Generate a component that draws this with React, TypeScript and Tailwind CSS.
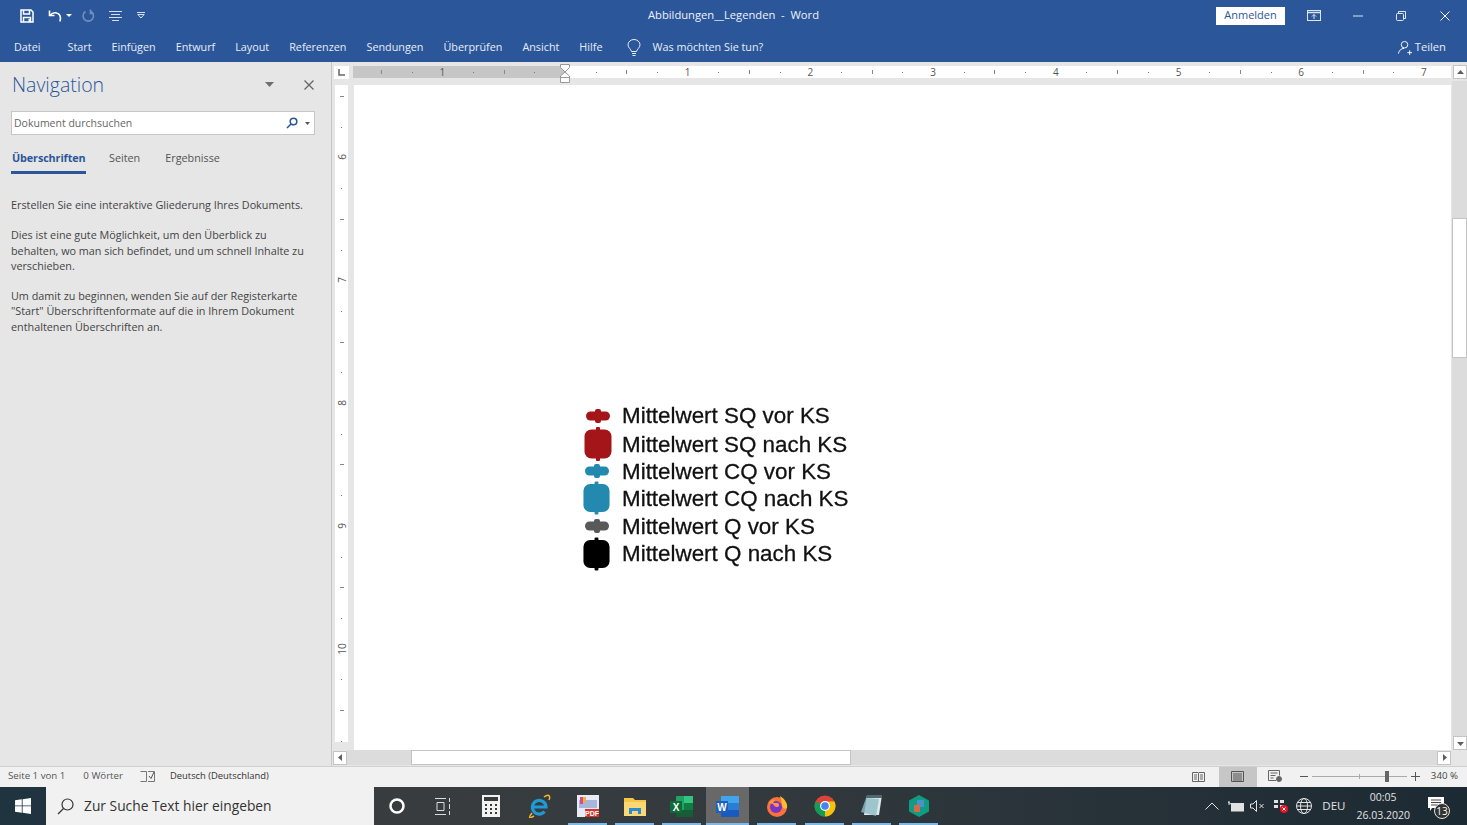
import React from "react";

const uiFont = { fontFamily: '"Open Sans", "Noto Sans", sans-serif' };

const tabs = ["Start", "Einfügen", "Entwurf", "Layout", "Referenzen", "Sendungen", "Überprüfen", "Ansicht", "Hilfe"];

const legend = [
  { label: "Mittelwert SQ vor KS", color: "#a31518", big: false, row: "h-[28px]", icon: "pr-[9px]", text: "mt-0" },
  { label: "Mittelwert SQ nach KS", color: "#a31518", big: true, row: "h-[28px]", icon: "pr-[9px]", text: "mt-[2px]" },
  { label: "Mittelwert CQ vor KS", color: "#2389ae", big: false, row: "h-[26px]", icon: "pr-[11px]", text: "mt-[2px]" },
  { label: "Mittelwert CQ nach KS", color: "#2389ae", big: true, row: "h-[28px]", icon: "pr-[11px]", text: "mt-[2px]" },
  { label: "Mittelwert Q vor KS", color: "#595959", big: false, row: "h-[28px]", icon: "pr-[11px]", text: "mt-[3px]" },
  { label: "Mittelwert Q nach KS", color: "#000000", big: true, row: "h-[28px]", icon: "pr-[11px]", text: "mt-px" },
];

const ORIGIN_X = 212; // 565 on screen, ruler starts at 353
const UNIT = 122.7;

function HorizontalRuler() {
  const marks: React.ReactNode[] = [];
  for (let q = -8; q <= 35; q++) {
    const x = ORIGIN_X + (q * UNIT) / 4;
    if (x < 4 || x > 1094) continue;
    const n = Math.abs(q) / 4;
    if (q !== 0 && q % 4 === 0) {
      marks.push(
        <span key={q} className="absolute top-0 -translate-x-1/2 text-[10px] leading-[12px] text-[#555]" style={{ left: x }}>
          {n}
        </span>
      );
    } else if (q % 2 !== 0) {
      marks.push(<span key={q} className="absolute top-[6px] h-px w-px bg-[#777]" style={{ left: x }} />);
    } else if (q !== 0) {
      marks.push(<span key={q} className="absolute top-[4px] h-[4px] w-px bg-[#888]" style={{ left: x }} />);
    }
  }
  return (
    <div className="relative h-[12px] w-[1098px] bg-white">
      <div className="absolute inset-y-0 left-0 w-[212px] bg-[#c6c6c6]" />
      {marks}
    </div>
  );
}

function VerticalRuler() {
  const marks: React.ReactNode[] = [];
  // first tick is at y=96 on screen, ruler starts at y=85
  for (let i = 0; i < 22; i++) {
    const y = 11 + i * 30.7;
    const kind = i % 4;
    if (kind === 2) {
      const n = 6 + (i - 2) / 4;
      marks.push(
        <span key={i} className="absolute left-0 w-[13px] -translate-y-1/2 -rotate-90 text-center text-[10px] leading-[12px] text-[#555]" style={{ top: y }}>
          {n}
        </span>
      );
    } else if (kind === 0) {
      marks.push(<span key={i} className="absolute left-[5px] h-px w-[4px] bg-[#888]" style={{ top: y }} />);
    } else {
      marks.push(<span key={i} className="absolute left-[6px] h-px w-px bg-[#777]" style={{ top: y }} />);
    }
  }
  return <div className="relative h-[657px] w-[13px] bg-white">{marks}</div>;
}

function Marker({ color, big }: { color: string; big: boolean }) {
  if (big) {
    return (
      <svg width="30" height="34" viewBox="0 0 30 34" className="block">
        <rect x="13" y="0" width="4" height="34" rx="1" fill={color} />
        <rect x="1.5" y="2.5" width="27" height="29" rx="7" fill={color} />
      </svg>
    );
  }
  return (
    <svg width="26" height="16" viewBox="0 0 26 16" className="block">
      <rect x="10" y="1" width="6" height="14" rx="2" fill={color} />
      <rect x="1" y="3.5" width="24" height="9" rx="4.5" fill={color} />
    </svg>
  );
}

function Arrow({ dir, className = "" }: { dir: "up" | "down" | "left" | "right"; className?: string }) {
  const points = { up: "1,6 4.5,2 8,6", down: "1,3 4.5,7 8,3", left: "6,1 2,4.5 6,8", right: "3,1 7,4.5 3,8" }[dir];
  return (
    <svg width="9" height="9" viewBox="0 0 9 9" className={className}>
      <polygon points={points} fill="#5f5f5f" />
    </svg>
  );
}

function ScrollButton({ dir }: { dir: "up" | "down" | "left" | "right" }) {
  return (
    <div className="flex h-[14px] w-[14px] shrink-0 items-center justify-center border border-[#c4c4c4] bg-white">
      <Arrow dir={dir} />
    </div>
  );
}

function QuickAccess() {
  return (
    <div className="flex items-center">
      <svg width="16" height="16" viewBox="0 0 16 16" className="ml-[19px]" fill="none" stroke="#fff" strokeWidth="1.5">
        <path d="M2 2h10l2 2v10H2z" />
        <path d="M4.5 2v4h6V2M4.5 14v-4.500h7V14" />
        <rect x="9.500" y="11" width="1.500" height="3" fill="#fff" stroke="none" />
      </svg>
      <svg width="16" height="14" viewBox="0 0 16 14" className="ml-[13px]" fill="none" stroke="#fff" strokeWidth="1.6">
        <path d="M1.500 1.500v5h5" />
        <path d="M2 6.500c2-2.500 4.500-3 6.500-2.500 3 .7 5 3.500 3.500 8.500" />
      </svg>
      <svg width="6" height="4" viewBox="0 0 6 4" className="ml-[2px]">
        <polygon points="0,0 6,0 3,3" fill="#fff" />
      </svg>
      <svg width="14" height="14" viewBox="0 0 14 14" className="ml-[9px]" fill="none" stroke="#6f8fbd" strokeWidth="1.600">
        <path d="M4.500 2.500a5.200 5.200 0 1 0 5-.3" />
        <path d="M9.500 0.500v4h3" />
      </svg>
      <svg width="13" height="10" viewBox="0 0 13 10" className="ml-[14px]" stroke="#d5deec" strokeWidth="1">
        <path d="M0 .5h13M2 3.500h9M0 6.500h13M3 9.500h7" />
      </svg>
      <svg width="8" height="7" viewBox="0 0 8 7" className="ml-[15px]" fill="none" stroke="#d5deec">
        <path d="M0 .5h8M.8 2.500h6.400L4 6z" />
      </svg>
    </div>
  );
}

function WindowControls() {
  return (
    <div className="flex items-center justify-end">
      <button className="flex h-[18px] w-[69px] items-center justify-center bg-white pb-px text-[11px] text-[#2b579a]">Anmelden</button>
      <svg width="14" height="11" viewBox="0 0 14 11" className="ml-[22px]" fill="none" stroke="#dfe6f1">
        <rect x=".5" y=".5" width="13" height="10" />
        <path d="M.5 2.500h13" strokeWidth="1.500" />
        <path d="M7 9V4.500M5 6.500l2-2 2 2" />
      </svg>
      <svg width="10" height="2" viewBox="0 0 10 2" className="ml-[32px]">
        <path d="M0 1h10" stroke="#dfe6f1" />
      </svg>
      <svg width="10" height="10" viewBox="0 0 10 10" className="ml-[33px]" fill="none" stroke="#dfe6f1">
        <rect x=".5" y="2.500" width="7" height="7" rx="1" />
        <path d="M2.500 2.500V.5h7v7H7.500" />
      </svg>
      <svg width="10" height="10" viewBox="0 0 10 10" className="ml-[34px] mr-[17px]" stroke="#fff">
        <path d="M.5.5l9 9M9.500.5l-9 9" />
      </svg>
    </div>
  );
}

function Ribbon() {
  return (
    <header className="h-[62px] shrink-0 bg-[#2b579a] text-white">
      <div className="grid h-[31px] grid-cols-[1fr_auto_1fr] items-center">
        <QuickAccess />
        <div className="text-[11.200px] text-[#eef2f8]">Abbildungen__Legenden&nbsp; -&nbsp; Word</div>
        <WindowControls />
      </div>
      <div className="flex h-[31px] items-center pl-[14px] pt-[2px] text-[10.800px] text-[#e8edf5]">
        <span className="mr-[27px]">Datei</span>
        <div className="flex gap-[20px]">
          {tabs.map((t) => (
            <span key={t}>{t}</span>
          ))}
        </div>
        <svg width="14" height="18" viewBox="0 0 14 18" className="ml-[25px]" fill="none" stroke="#e8edf5">
          <path d="M4.500 12.500C4 10 1 8.800 1 5.800a6 5.300 0 0 1 12 0c0 3-3 4.200-3.500 6.700zM5 14.500h4M5.500 16.500h3" />
        </svg>
        <span className="ml-[11px]">Was möchten Sie tun?</span>
        <div className="ml-auto mr-[21px] flex items-center gap-[3px]">
          <svg width="14" height="15" viewBox="0 0 15 15" fill="none" stroke="#fff">
            <circle cx="7" cy="4.500" r="3.500" />
            <path d="M.5 14c.5-3.500 3-5.500 6-5.500M10 13h5M12.500 10.500v5" />
          </svg>
          <span className="text-[11.200px]">Teilen</span>
        </div>
      </div>
    </header>
  );
}

function NavigationPane() {
  return (
    <aside className="w-[332px] shrink-0 border-r border-[#c6c6c6] bg-[#e6e6e6] pl-[11px] pr-[16px]">
      <div className="flex h-[49px] items-center">
        <h1 className="mb-[3px] pl-px text-[19.500px] font-light text-[#2b579a]">Navigation</h1>
        <svg width="9" height="5" viewBox="0 0 9 5" className="mb-[5px] ml-auto">
          <polygon points="0,0 9,0 4.500,5" fill="#6f6f6f" />
        </svg>
        <svg width="10" height="10" viewBox="0 0 10 10" className="mb-[3px] ml-[30px] mr-px" stroke="#666" strokeWidth="1.300">
          <path d="M.5.5l9 9M9.500.5l-9 9" />
        </svg>
      </div>
      <div className="flex h-[24px] items-center border border-[#c6c6c6] bg-white pl-[2px] pr-[4px] text-[10.500px] text-[#666]">
        <span className="pt-[2px]">Dokument durchsuchen</span>
        <svg width="12" height="12" viewBox="0 0 12 12" className="ml-auto" fill="none" stroke="#2b579a" strokeWidth="1.600">
          <circle cx="7.500" cy="4.500" r="3.300" />
          <path d="M5 7L1 11" />
        </svg>
        <svg width="5" height="3" viewBox="0 0 5 3" className="ml-[7px]">
          <polygon points="0,0 5,0 2.500,3" fill="#555" />
        </svg>
      </div>
      <div className="mt-[12px] flex h-[27px] text-[10.800px] text-[#555]">
        <div className="h-full w-[75px] border-b-[3px] border-[#2b579a] pl-px pt-[3px] font-bold tracking-[-0.1px] text-[#2b579a]">Überschriften</div>
        <div className="ml-[23px] pt-[3px]">Seiten</div>
        <div className="ml-[25px] pt-[3px]">Ergebnisse</div>
      </div>
      <div className="mt-[23px] space-y-[15px] pr-[10px] text-[10.800px] leading-[15.300px] text-[#444]">
        <p>Erstellen Sie eine interaktive Gliederung Ihres Dokuments.</p>
        <p>Dies ist eine gute Möglichkeit, um den Überblick zu behalten, wo man sich befindet, und um schnell Inhalte zu verschieben.</p>
        <p>Um damit zu beginnen, wenden Sie auf der Registerkarte "Start" Überschriftenformate auf die in Ihrem Dokument enthaltenen Überschriften an.</p>
      </div>
    </aside>
  );
}

function DocumentArea() {
  return (
    <main className="flex min-w-0 flex-1 flex-col bg-[#e6e6e6]">
      <div className="flex min-h-0 flex-1">
        <div className="flex w-[1119px] flex-col">
          <div className="flex h-[23px] pt-[4px]">
            <div className="ml-[2px] flex h-[13px] w-[15px] items-center justify-center bg-white">
              <svg width="7" height="7" viewBox="0 0 7 7">
                <path d="M1 0v6h6" fill="none" stroke="#666" strokeWidth="1.500" />
              </svg>
            </div>
            <div className="relative ml-[4px]">
              <HorizontalRuler />
              <svg width="10" height="19" viewBox="0 0 10 19" className="absolute left-[207px] top-[-2px]" fill="#e6e6e6" stroke="#999">
                <path d="M.5.5h9v3L5 8 .5 3.500z" fill="#fff" />
                <path d="M5 8l4.500 4v6.500h-9V12z" fill="#fff" />
                <path d="M.5 13.500h9" />
              </svg>
            </div>
          </div>
          <div className="flex min-h-0 flex-1">
            <div className="ml-[3px] shrink-0">
              <VerticalRuler />
            </div>
            <div className="ml-[6px] flex-1 bg-white pl-[228px] pt-[317px]">
              {/* Legende ist im Original ein eingefuegtes Bild, daher leicht unscharf */}
              <div className="blur-[0.6px]" style={{ fontFamily: '"Liberation Sans", Arial, sans-serif' }}>
                {legend.map((l) => (
                  <div key={l.label} className={`flex items-center ${l.row}`}>
                    <div className={`flex w-[40px] justify-center ${l.icon}`}>
                      <Marker color={l.color} big={l.big} />
                    </div>
                    <span className={`whitespace-nowrap text-[22.400px] leading-none text-[#111] [-webkit-text-stroke:0.3px_#111] ${l.text}`}>{l.label}</span>
                  </div>
                ))}
              </div>
            </div>
          </div>
        </div>
        <div className="flex w-[16px] flex-col items-end pt-[3px]">
          <ScrollButton dir="up" />
          <div className="mt-[2px] flex w-[15px] flex-1 flex-col bg-[#dcdcdc]">
            <div className="mt-[137px] h-[140px] w-full border border-[#c4c4c4] bg-white" />
          </div>
          <ScrollButton dir="down" />
        </div>
      </div>
      <div className="flex h-[16px] items-center pb-px pl-px">
        <ScrollButton dir="left" />
        <div className="flex h-[15px] w-[1090px] bg-[#dcdcdc]">
          <div className="ml-[64px] h-full w-[440px] border border-[#c4c4c4] bg-white" />
        </div>
        <ScrollButton dir="right" />
      </div>
    </main>
  );
}

function StatusBar() {
  return (
    <footer className="flex h-[21px] shrink-0 items-center border-t border-[#d0d0d0] bg-[#f1f1f1] pb-[2px] pl-[8px] text-[9.700px] text-[#555]">
      <span>Seite 1 von 1</span>
      <span className="ml-[18px]">0 Wörter</span>
      <svg width="15" height="11" viewBox="0 0 15 11" className="ml-[17px]" fill="none" stroke="#777">
        <path d="M.5.5h6v10h-6M8 .5h6.500v10H8" />
        <path d="M9 5l2 2.500L14 1" stroke="#555" />
      </svg>
      <span className="ml-[15px] text-[9.400px] text-[#333]">Deutsch (Deutschland)</span>
      <div className="ml-auto flex h-[20px] items-center self-start">
        <svg width="13" height="10" viewBox="0 0 13 10" className="mb-px" fill="none" stroke="#666">
          <path d="M.5.5h5.500l.5 1 .5-1h5.500v9H.5zM6.500 1.500v8M2 3h3M2 5h3M2 7h3M8 3h3M8 5h3M8 7h3" />
        </svg>
        <div className="ml-[14px] flex h-full w-[38px] items-center justify-center bg-[#c6c6c6] pb-px">
          <svg width="13" height="11" viewBox="0 0 13 11" fill="none" stroke="#555">
            <path d="M.5.5h12v10H.5zM2 3h9M2 5h9M2 7h9M2 9h9" />
          </svg>
        </div>
        <div className="flex items-center pb-px">
          <svg width="14" height="12" viewBox="0 0 14 12" className="ml-[11px]" fill="none" stroke="#666">
            <path d="M8 10.500H.5V.5h11v5M2.500 3h7M2.500 5.500h5M2.500 8h3" />
            <circle cx="11" cy="9" r="2.500" fill="#666" />
          </svg>
          <span className="ml-[18px] h-px w-[8px] bg-[#555]" />
          <div className="relative ml-[4px] h-px w-[95px] bg-[#aaa]">
            <span className="absolute left-[47px] top-[-2px] h-[5px] w-px bg-[#aaa]" />
            <span className="absolute left-[73px] top-[-5px] h-[11px] w-[4px] bg-[#666]" />
          </div>
          <svg width="9" height="9" viewBox="0 0 9 9" className="ml-[4px]" stroke="#555">
            <path d="M0 4.500h9M4.500 0v9" />
          </svg>
          <span className="ml-[11px] mr-[9px] text-[#444]">340 %</span>
        </div>
      </div>
    </footer>
  );
}

function Slot({ active, bar = true, children }: { active?: boolean; bar?: boolean; children: React.ReactNode }) {
  return (
    <div className={`relative flex h-full w-[39px] shrink-0 items-center justify-center ${active ? "bg-[#686868]" : ""}`}>
      {children}
      {bar && <span className="absolute inset-x-0 bottom-0 h-[2px] bg-[#7db9e8]" />}
    </div>
  );
}

function TaskbarApps() {
  return (
    <div className="flex h-full items-center">
      <svg width="18" height="18" viewBox="0 0 18 18" className="ml-[14px]" fill="none" stroke="#fff" strokeWidth="2.500">
        <circle cx="9" cy="9" r="6.500" />
      </svg>
      <svg width="18" height="17" viewBox="0 0 18 17" className="ml-[28px]" fill="none" stroke="#dcdcdc">
        <path d="M1 .5h11M1 16.500h11M3 4.500h7v8H3zM15.500 0v4M15.500 6v5M15.500 13v4" />
      </svg>
      <svg width="18" height="22" viewBox="0 0 18 22" className="ml-[30px]">
        <rect width="18" height="22" fill="#f2f2f2" />
        <rect x="2" y="2" width="14" height="4" fill="#3a3a3a" />
        <path d="M3 9h2v2H3zM8 9h2v2H8zM13 9h2v2h-2zM3 13h2v2H3zM8 13h2v2H8zM13 13h2v2h-2zM3 17h2v2H3zM8 17h2v2H8zM13 17h2v2h-2z" fill="#3a3a3a" />
      </svg>
      <div className="ml-[19px] flex h-full">
        <Slot bar={false}>
          <svg width="24" height="24" viewBox="0 0 24 24" fill="none">
            <path d="M5 19C1 24 2 25 7 22" stroke="#f2b632" strokeWidth="1.500" />
            <path d="M17 3c4-3 7-2 5 3" stroke="#f2b632" strokeWidth="1.500" />
            <path d="M6 13h13a6.800 6.800 0 1 0-1.500 4.500" stroke="#1e9ad6" strokeWidth="3.200" />
          </svg>
        </Slot>
        <div className="ml-[10px]">
          <Slot>
            <svg width="22" height="22" viewBox="0 0 22 22">
              <rect width="22" height="22" fill="#e7ebf5" />
              <path d="M2 5h18v8H2z" fill="#a7b6dd" />
              <path d="M3 2h3v7H3z" fill="#d54b9a" />
              <path d="M6 2h3v6H6z" fill="#e6b63c" />
              <rect x="8" y="14" width="14" height="8" fill="#d8322a" />
              <text x="15" y="21" textAnchor="middle" fontSize="7" fontWeight="700" fill="#fff" fontFamily="Liberation Sans">PDF</text>
            </svg>
          </Slot>
        </div>
        <div className="ml-[8px]">
          <Slot>
            <svg width="22" height="19" viewBox="0 0 22 19">
              <path d="M0 1h9l2 2h11v16H0z" fill="#f6c744" />
              <rect x="0" y="5" width="22" height="14" fill="#fbd873" />
              <path d="M5 17v-6h12v6h-3v-3H8v3z" fill="#2a8ad4" />
            </svg>
          </Slot>
        </div>
        <div className="ml-[8px]">
          <Slot>
            <svg width="23" height="21" viewBox="0 0 23 21">
              <rect x="6" y="0" width="17" height="21" rx="1" fill="#21a366" />
              <rect x="14" y="0" width="9" height="7" fill="#33c481" />
              <rect x="6" y="14" width="17" height="7" fill="#185c37" />
              <rect x="14" y="7" width="9" height="7" fill="#107c41" />
              <rect x="0" y="5" width="12" height="12" fill="#0f6b3a" />
              <text x="6" y="15" textAnchor="middle" fontSize="10" fontWeight="700" fill="#fff" fontFamily="Liberation Sans">X</text>
            </svg>
          </Slot>
        </div>
        <div className="ml-[5px]">
          <div className="relative flex h-full w-[43px] items-center justify-center bg-[#686868]">
            <svg width="23" height="21" viewBox="0 0 23 21">
              <rect x="5" y="0" width="18" height="21" rx="1" fill="#2b7cd3" />
              <rect x="5" y="0" width="18" height="7" fill="#41a5ee" />
              <rect x="5" y="14" width="18" height="7" fill="#185abd" />
              <rect x="0" y="5" width="12" height="12" fill="#1d5fc0" />
              <text x="6" y="15" textAnchor="middle" fontSize="10" fontWeight="700" fill="#fff" fontFamily="Liberation Sans">W</text>
            </svg>
            <span className="absolute inset-x-0 bottom-0 h-[2px] bg-[#7db9e8]" />
          </div>
        </div>
        <div className="ml-[8px]">
          <Slot>
            <svg width="22" height="22" viewBox="0 0 22 22">
              <circle cx="11" cy="12" r="10" fill="#ff7139" />
              <path d="M14 1c5 3 8 8 7 12-2 2-5 0-5-3s-1-6-2-9z" fill="#ffbd2e" />
              <circle cx="10" cy="12" r="6" fill="#7a33c9" />
              <path d="M3 8c1-3 4-4 6-3l-2 3h5c2 2 1 4-1 4S8 11 7 9z" fill="#ff9640" />
            </svg>
          </Slot>
        </div>
        <div className="ml-[9px]">
          <Slot>
            <svg width="22" height="22" viewBox="0 0 22 22">
              <circle cx="11" cy="11" r="10.500" fill="#db4437" />
              <path d="M11 11L1.500 6.500A10.500 10.500 0 0 0 11 21.500z" fill="#0f9d58" />
              <path d="M11 11V21.500A10.500 10.500 0 0 0 20.500 6.500H11z" fill="#f4c20d" />
              <circle cx="11" cy="11" r="5" fill="#fff" />
              <circle cx="11" cy="11" r="3.800" fill="#4285f4" />
            </svg>
          </Slot>
        </div>
        <div className="ml-[8px]">
          <Slot>
            <svg width="21" height="22" viewBox="0 0 21 22">
              <path d="M6 0h15l-3 20H3z" fill="#dce9ea" />
              <path d="M5 3l-5 14 15 4 3-17z" fill="#8fbcc4" opacity=".8" />
              <path d="M6 0h15v3H6z" fill="#4d6a70" />
            </svg>
          </Slot>
        </div>
        <div className="ml-[8px]">
          <Slot>
            <svg width="20" height="22" viewBox="0 0 20 22">
              <polygon points="10,0 20,5.500 20,16.500 10,22 0,16.500 0,5.500" fill="#0e9c82" />
              <rect x="8" y="5" width="7" height="7" fill="#4c92c9" />
              <rect x="5" y="10" width="6" height="7" fill="#d9684b" />
            </svg>
          </Slot>
        </div>
      </div>
    </div>
  );
}

function Tray() {
  return (
    <div className="ml-auto flex h-full items-center text-[#e2e2e2]">
      <svg width="14" height="8" viewBox="0 0 14 8" fill="none" stroke="#e2e2e2">
        <path d="M.5 7.500L7 1l6.500 6.500" />
      </svg>
      <svg width="16" height="11" viewBox="0 0 16 11" className="ml-[9px]" fill="none" stroke="#e2e2e2">
        <rect x="3.500" y="2.500" width="12" height="7.500" fill="#e2e2e2" />
        <path d="M0 1l3 2M1 0v4" />
      </svg>
      <svg width="15" height="12" viewBox="0 0 15 12" className="ml-[6px]" fill="none" stroke="#e2e2e2">
        <path d="M.5 4h2.500L6.500.5v11L3 8H.5zM9.500 4l4 4M13.500 4l-4 4" />
      </svg>
      <svg width="16" height="14" viewBox="0 0 16 14" className="ml-[8px]">
        <path d="M1 1h4v3H1zM7 1h4v3H7zM1 6h4v3H1zM7 6h4v3H7z" fill="#e2e2e2" />
        <circle cx="11" cy="10" r="4" fill="#e81123" />
        <path d="M9.500 8.500l3 3M12.500 8.500l-3 3" stroke="#fff" />
      </svg>
      <svg width="16" height="16" viewBox="0 0 16 16" className="ml-[7px]" fill="none" stroke="#e2e2e2">
        <circle cx="8" cy="8" r="7.500" />
        <ellipse cx="8" cy="8" rx="3.500" ry="7.500" />
        <path d="M.5 8h15M1.500 4.500h13M1.500 11.500h13" />
      </svg>
      <span className="ml-[10px] text-[11.500px]">DEU</span>
      <div className="ml-[11px] text-center text-[10.500px] leading-[18px]">
        <div>00:05</div>
        <div>26.03.2020</div>
      </div>
      <div className="relative ml-[18px] mr-[19px] h-[24px] w-[20px]">
        <svg width="16" height="14" viewBox="0 0 16 14" className="absolute left-0 top-[3px]">
          <path d="M0 0h16v11H4l-2 3v-3H0z" fill="#fff" />
          <path d="M3 3h10M3 5.500h10M3 8h8" stroke="#444" />
        </svg>
        <span className="absolute left-[6px] top-[9px] flex h-[16px] w-[16px] items-center justify-center rounded-full border border-[#e2e2e2] bg-[#333] text-[10px] leading-none text-white">13</span>
      </div>
    </div>
  );
}

function Taskbar() {
  return (
    <div className="flex h-[38px] shrink-0 bg-gradient-to-r from-[#3f3f3f] via-[#333a3e] to-[#1c2a33] text-white">
      <div className="flex w-[46px] items-center justify-center bg-[#20343f]">
        <svg width="16" height="16" viewBox="0 0 16 16" fill="#fff">
          <path d="M0 2.300l6.800-1V7.500H0zM7.600 1.200L16 0v7.500H7.600zM0 8.300h6.800v6.400L0 13.700zM7.600 8.300H16V16l-8.400-1.200z" />
        </svg>
      </div>
      <div className="flex w-[328px] items-center bg-[#f1f1f1] pl-[11px] text-[13.800px] text-[#333]">
        <svg width="17" height="17" viewBox="0 0 17 17" fill="none" stroke="#333" strokeWidth="1.200">
          <circle cx="10.500" cy="6.500" r="5.500" />
          <path d="M6.500 10.500L1 16" />
        </svg>
        <span className="ml-[10px]">Zur Suche Text hier eingeben</span>
      </div>
      <TaskbarApps />
      <Tray />
    </div>
  );
}

export default function App() {
  return (
    <div className="flex h-screen w-full flex-col overflow-hidden bg-[#e6e6e6]" style={uiFont}>
      <Ribbon />
      <div className="flex min-h-0 flex-1">
        <NavigationPane />
        <DocumentArea />
      </div>
      <StatusBar />
      <Taskbar />
    </div>
  );
}
